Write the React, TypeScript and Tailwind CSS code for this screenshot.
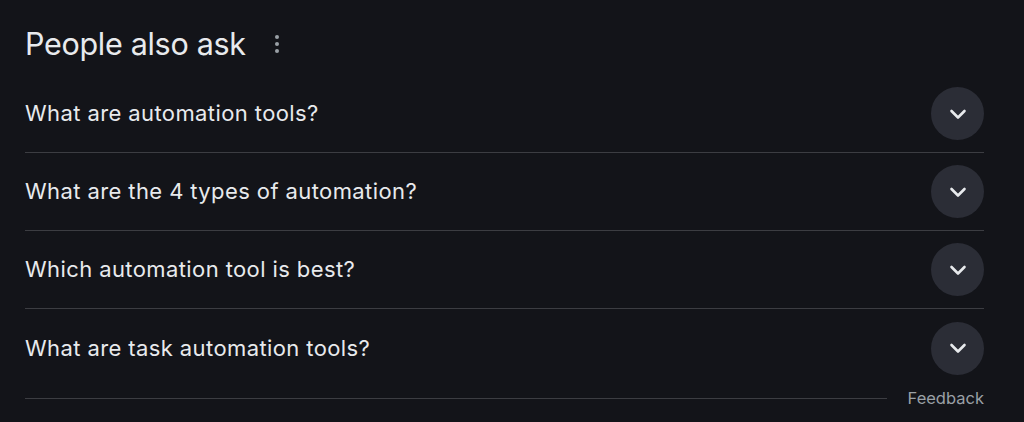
import React from "react";

const questions = [
  "What are automation tools?",
  "What are the 4 types of automation?",
  "Which automation tool is best?",
  "What are task automation tools?",
];

function Chevron() {
  return (
    <svg viewBox="0 0 24 24" className="w-6 h-6" fill="none">
      <path
        d="M5.5 9 12 15.5 18.5 9"
        stroke="#e8eaed"
        strokeWidth="2.6"
        strokeLinecap="round"
        strokeLinejoin="round"
      />
    </svg>
  );
}

export default function App() {
  return (
    <div className="w-[1024px] h-[422px] bg-[#131419] overflow-hidden font-['Inter','Liberation_Sans',Arial,sans-serif]">
      <div className="w-[959px] ml-[25px]">
        <div className="h-[75px] flex items-center pt-[13px]">
          <h2 className="text-[30.5px] leading-none text-[#e8eaed] tracking-[-0.3px]">
            People also ask
          </h2>
          <div className="ml-[29px] flex flex-col gap-[3px]">
            <span className="w-[4px] h-[4px] rounded-full bg-[#9aa0a6]" />
            <span className="w-[4px] h-[4px] rounded-full bg-[#9aa0a6]" />
            <span className="w-[4px] h-[4px] rounded-full bg-[#9aa0a6]" />
          </div>
        </div>
        {questions.map((q, i) => (
          <div
            key={i}
            className={
              i < questions.length - 1
                ? "h-[78px] flex items-center justify-between border-b border-[#3c3d42]"
                : "h-[78px] flex items-center justify-between"
            }
          >
            <span className="text-[22px] tracking-[0.4px] text-[#e8eaed]">{q}</span>
            <div className="w-[53px] h-[53px] rounded-full bg-[#2b2d36] flex items-center justify-center">
              <Chevron />
            </div>
          </div>
        ))}
        <div className="flex items-center mt-[-1px]">
          <div className="flex-1 border-t border-[#3c3d42] mr-[21px]" />
          <span className="text-[16.5px] text-[#9aa0a6]">Feedback</span>
        </div>
      </div>
    </div>
  );
}
